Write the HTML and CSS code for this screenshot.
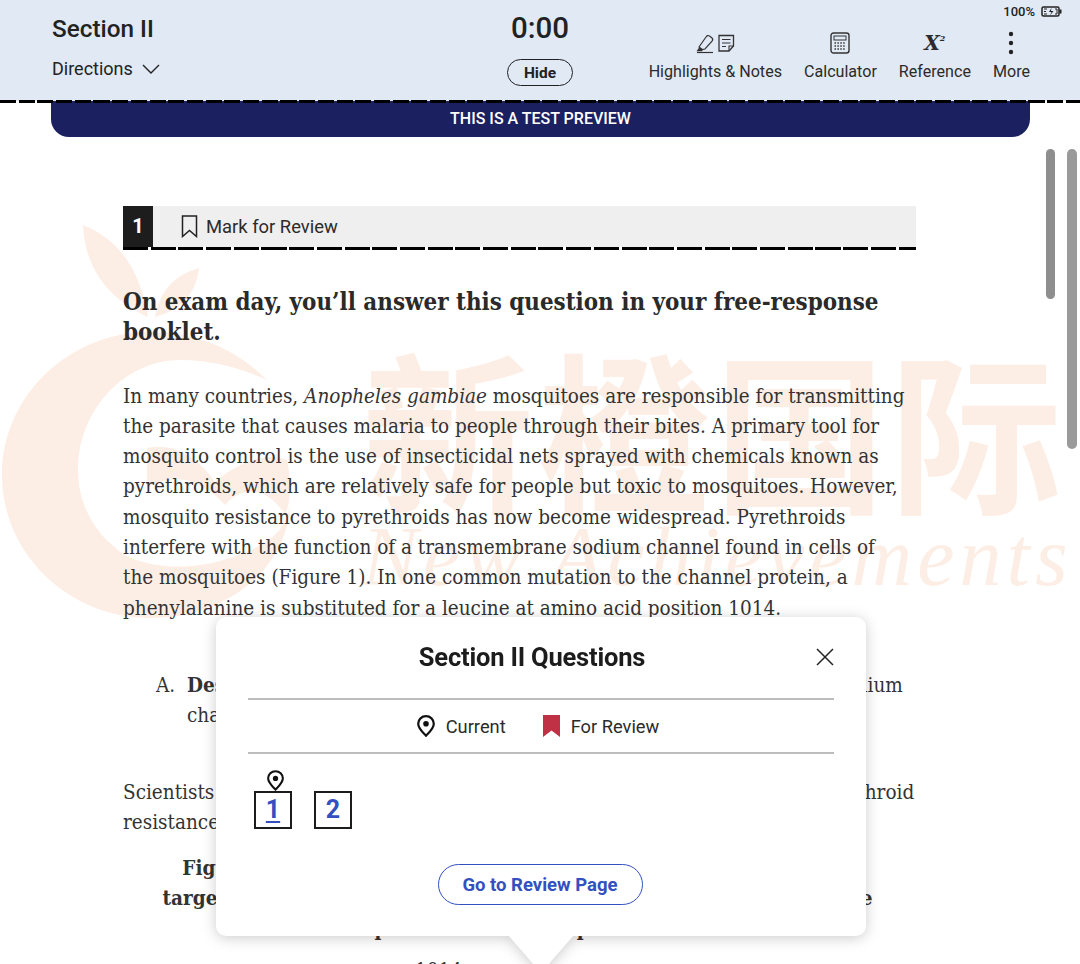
FILE: index.html
```html
<!doctype html>
<html lang="en">
<head>
  <meta charset="UTF-8" />
  <title>Section II</title>
  <link rel="stylesheet" href="styles.css">
</head>
<body>
<div class="page">
  <header class="top-bar">
    <div class="section-info">
      <div class="section-name">Section II</div>
      <div class="directions">Directions
        <svg class="chevron" width="18" height="10" viewBox="0 0 18 10"><path d="M1 1l8 8 8-8" fill="none" stroke="#222" stroke-width="1.4"/></svg>
      </div>
    </div>
    <div class="timer">
      <div class="time">0:00</div>
      <button class="hide-btn">Hide</button>
    </div>
    <div class="right-side">
      <div class="status">100%
        <svg width="21" height="11" viewBox="0 0 21 11"><rect x="1" y="1" width="17" height="9" rx="1.5" fill="none" stroke="#222" stroke-width="1.5"/><rect x="18.5" y="3.5" width="2" height="4" fill="#222"/><path d="M10.5 2L8 6h2.5L9 9.5 12.5 5H10z" fill="#222"/><path d="M3 3h3M3 5.5h2M3 8h3M14 3h2v5h-2" fill="none" stroke="#222"/></svg>
      </div>
      <nav class="tools">
        <div class="tool">
          <svg width="40" height="22" viewBox="0 0 40 22">
            <path d="M4 15L11 5c1-1.500 2-2 3.500-1L17 6c1 1 1 2 0 3.200L10 17l-3 .5z" fill="none" stroke="#333" stroke-width="1.200"/>
            <path d="M4.500 15l3.500 2.500-1 1.800H1.500z" fill="#333"/>
            <path d="M2 20.500h16" stroke="#333" stroke-width="1.200"/>
            <path d="M24 3.500h14.500v10.500l-4.500 5H24z" fill="none" stroke="#333" stroke-width="1.300"/>
            <path d="M27 7.500h8.500M27 11h8.500M27 14.500h4M34 19v-5h4.500" fill="none" stroke="#333" stroke-width="1.100"/>
          </svg>
          <span>Highlights &amp; Notes</span>
        </div>
        <div class="tool">
          <svg width="20" height="22" viewBox="0 0 20 22">
            <rect x="1" y="1" width="18" height="20" rx="2.500" fill="none" stroke="#333" stroke-width="1.400"/>
            <rect x="4" y="4" width="12" height="4" fill="none" stroke="#333" stroke-width="1"/>
            <path d="M4.500 11h11M4.500 14h11M4.500 17h11" stroke="#333" stroke-width="1.600" stroke-dasharray="1.500 1.400"/>
          </svg>
          <span>Calculator</span>
        </div>
        <div class="tool">
          <div class="ref-icon">X<sup>2</sup></div>
          <span>Reference</span>
        </div>
        <div class="tool">
          <svg width="6" height="24" viewBox="0 0 6 24"><circle cx="3" cy="3" r="2.200" fill="#222"/><circle cx="3" cy="12" r="2.200" fill="#222"/><circle cx="3" cy="21" r="2.200" fill="#222"/></svg>
          <span>More</span>
        </div>
      </nav>
    </div>
  </header>
  <div class="dash-line"></div>
  <div class="preview-banner">THIS IS A TEST PREVIEW</div>

  <main class="content">
    <div class="watermark">
      <svg class="wm-logo" width="300" height="420" viewBox="0 0 300 420">
        <path d="M83 5C120 20 140 50 148 97C110 80 85 50 83 5z" fill="#fdeee5"/>
        <path d="M199 48C196 75 180 90 155 97C160 70 175 55 199 48z" fill="#fdeee5"/>
        <path d="M267 160C235 128 195 112 150 112C70 112 2 175 2 255C2 335 70 398 150 398C225 398 287 350 290 285C285 315 265 325 233 337C190 352 150 348 125 335C95 315 78 285 78 250C78 190 125 140 180 140C215 140 245 150 267 160z" fill="#fdeee5"/>
        <path d="M147 228C175 222 200 240 215 262C240 240 270 232 287 240C292 262 290 285 285 295C270 270 245 262 225 285C205 262 175 250 147 268z" fill="#fdeee5"/>
      </svg>
      <div class="wm-cn">新橙国际</div>
      <div class="wm-en">New Achievements</div>
    </div>

    <div class="question-bar">
      <div class="question-no">1</div>
      <svg class="mark-icon" width="17" height="23" viewBox="0 0 17 23"><path d="M1.500 1h14v20.500l-7-6-7 6z" fill="none" stroke="#222" stroke-width="1.500"/></svg>
      <span>Mark for Review</span>
    </div>
    <div class="question-rule"></div>

    <h2 class="prompt">On exam day, you’ll answer this question in your free-response<br>booklet.</h2>

    <p class="passage">In many countries, <em>Anopheles gambiae</em> mosquitoes are responsible for transmitting<br>
    the parasite that causes malaria to people through their bites. A primary tool for<br>
    mosquito control is the use of insecticidal nets sprayed with chemicals known as<br>
    pyrethroids, which are relatively safe for people but toxic to mosquitoes. However,<br>
    mosquito resistance to pyrethroids has now become widespread. Pyrethroids<br>
    interfere with the function of a transmembrane sodium channel found in cells of<br>
    the mosquitoes (Figure 1). In one common mutation to the channel protein, a<br>
    phenylalanine is substituted for a leucine at amino acid position 1014.</p>

    <ol class="parts">
      <li><span class="part-letter">A.</span><div><b>Describe</b> the effect of pyrethroid exposure on the functioning of the sodium<br>channel in a mosquito cell.</div></li>
    </ol>

    <p class="passage second">Scientists investigated whether the mutation contributes to the mosquito pyrethroid<br>resistance in the mosquitoes.</p>

    <p class="caption"><b>Figure 1. Structure of the mosquito sodium channel protein that<br>target of pyrethroids. The site of the common mutation lies near the<br>protein amino acid position</b></p>
    <p class="caption-end">1014</p>
  </main>

  <div class="scroll-thumb one"></div>
  <div class="scroll-thumb two"></div>

  <section class="popup">
    <div class="popup-head">
      <h3>Section II Questions</h3>
      <svg class="close-x" width="18" height="18" viewBox="0 0 18 18"><path d="M1 1l16 16M17 1L1 17" stroke="#222" stroke-width="1.500"/></svg>
    </div>
    <div class="legend">
      <div class="legend-item">
        <svg width="18" height="22" viewBox="0 0 18 22"><path d="M9 1.200c4.300 0 7.800 3.300 7.800 7.500 0 4.700-4.800 8.800-7.800 12-3-3.200-7.800-7.300-7.800-12C1.200 4.500 4.700 1.200 9 1.200z" fill="none" stroke="#111" stroke-width="2.200"/><circle cx="9" cy="8.800" r="2.800" fill="#111"/></svg>
        <span>Current</span>
      </div>
      <div class="legend-item">
        <svg width="17" height="22" viewBox="0 0 17 22"><path d="M0 0h17v22l-8.500-6.500L0 22z" fill="#c13145"/></svg>
        <span>For Review</span>
      </div>
    </div>
    <div class="question-grid">
      <div class="q-cell">
        <svg class="pin" width="17" height="21" viewBox="0 0 18 22"><path d="M9 1.200c4.300 0 7.800 3.300 7.800 7.500 0 4.700-4.800 8.800-7.800 12-3-3.200-7.800-7.300-7.800-12C1.200 4.500 4.700 1.200 9 1.200z" fill="#fff" stroke="#111" stroke-width="2.200"/><circle cx="9" cy="8.800" r="2.800" fill="#111"/></svg>
        <a class="q-box current">1</a>
      </div>
      <div class="q-cell">
        <a class="q-box">2</a>
      </div>
    </div>
    <div class="popup-foot">
      <button class="review-btn">Go to Review Page</button>
    </div>
  </section>
</div>
</body>
</html>
```

FILE: styles.css
```css
html, body {
  margin: 0;
  padding: 0;
}
body {
  font-family: Roboto, Arial, sans-serif;
  background-color: white;
  color: #222;
}
.page {
  position: relative;
  width: 1080px;
  height: 964px;
  overflow: hidden;
}

/* top bar */
.top-bar {
  position: relative;
  z-index: 2;
  display: grid;
  grid-template-columns: 1fr 120px 1fr;
  height: 101px;
  background-color: #e1e9f5;
}
.section-info {
  padding: 14px 0 0 52px;
}
.section-name {
  font-size: 24.3px;
  line-height: 30px;
  font-weight: 500;
}
.directions {
  display: flex;
  align-items: center;
  gap: 9px;
  margin-top: 11px;
  font-size: 18px;
  line-height: 28px;
}
.timer {
  display: flex;
  flex-direction: column;
  align-items: center;
  padding-top: 11px;
}
.time {
  font-size: 29.5px;
  line-height: 34px;
  font-weight: 500;
}
.hide-btn {
  width: 66px;
  height: 27px;
  margin-top: 14px;
  padding: 0;
  background: transparent;
  border: 1.5px solid #222;
  border-radius: 14px;
  font-family: inherit;
  font-size: 15.5px;
  font-weight: 700;
  color: #222;
}
.right-side {
  display: flex;
  flex-direction: column;
  align-items: flex-end;
}
.status {
  display: flex;
  align-items: center;
  gap: 6px;
  height: 13px;
  padding: 5px 18px 0 0;
  font-size: 13px;
  font-weight: 500;
}
.tools {
  display: flex;
  gap: 22px;
  margin-top: 13px;
  padding-right: 50px;
}
.tool {
  display: flex;
  flex-direction: column;
  align-items: center;
  font-size: 16.1px;
  color: #2b2b2b;
}
.tool svg,
.ref-icon {
  height: 24px;
  margin-bottom: 7px;
}
.ref-icon {
  font-family: "DejaVu Serif", serif;
  font-style: italic;
  font-weight: 700;
  font-size: 20px;
  line-height: 24px;
}
.ref-icon sup {
  font-size: 8px;
  line-height: 0;
  vertical-align: 9px;
}
.dash-line {
  position: relative;
  z-index: 2;
  height: 3px;
  margin-top: -1px;
  background: repeating-linear-gradient(90deg, #000 0, #000 16px, transparent 16px, transparent 18.7px);
}
.preview-banner {
  position: relative;
  z-index: 1;
  height: 36px;
  margin: -2px 50px 0 51px;
  background-color: #1a2060;
  border-radius: 0 0 18px 18px;
  color: white;
  font-size: 16px;
  font-weight: 500;
  line-height: 36px;
  text-align: center;
}

/* question area */
.content {
  padding: 69px 0 0 123px;
}
.watermark {
  position: absolute;
  top: 220px;
  left: 0;
  width: 1080px;
  height: 420px;
  z-index: -1;
  color: #fdeee5;
}
.wm-logo {
  position: absolute;
  top: 0;
  left: 0;
}
.wm-cn {
  position: absolute;
  top: 110px;
  left: 362px;
  font-family: "Noto Sans CJK SC", sans-serif;
  font-size: 172px;
  line-height: 190px;
  font-weight: 700;
  letter-spacing: 4px;
  white-space: nowrap;
}
.wm-en {
  position: absolute;
  top: 292px;
  left: 362px;
  font-family: "Liberation Serif", serif;
  font-style: italic;
  font-size: 84px;
  line-height: 90px;
  letter-spacing: 5px;
  white-space: nowrap;
}
.question-bar {
  display: flex;
  align-items: center;
  width: 793px;
  height: 41px;
  background-color: #efefef;
  font-size: 18.4px;
  color: #2b2b2b;
}
.question-no {
  width: 30px;
  height: 41px;
  margin-right: 28px;
  background-color: #1d1d1d;
  color: white;
  font-size: 20px;
  font-weight: 700;
  line-height: 41px;
  text-align: center;
}
.mark-icon {
  margin-right: 8px;
}
.question-rule {
  width: 793px;
  height: 3px;
  background: repeating-linear-gradient(90deg, #000 0, #000 25px, transparent 25px, transparent 27.7px);
}
.prompt {
  margin: 37px 0 0;
  font-family: "DejaVu Serif Condensed", "DejaVu Serif", serif;
  font-size: 23.9px;
  line-height: 30.3px;
  font-weight: 700;
  color: #2a2a2a;
  white-space: nowrap;
}
.passage {
  margin: 33px 0 0;
  font-family: "DejaVu Serif Condensed", "DejaVu Serif", serif;
  font-size: 20.5px;
  line-height: 30.3px;
  color: #333;
  white-space: nowrap;
}
.passage.second {
  margin-top: 46px;
}
.parts {
  margin: 47px 0 0;
  padding: 0;
  list-style: none;
  font-family: "DejaVu Serif Condensed", "DejaVu Serif", serif;
  font-size: 20.5px;
  line-height: 30.3px;
  color: #333;
  white-space: nowrap;
}
.parts li {
  display: flex;
  padding-left: 33px;
}
.part-letter {
  width: 31px;
}
.caption {
  width: 793px;
  margin: 16px 0 0 -2px;
  font-family: "DejaVu Serif Condensed", "DejaVu Serif", serif;
  font-size: 20.5px;
  line-height: 30.3px;
  color: #333;
  text-align: center;
  white-space: nowrap;
}
.caption-end {
  margin: 11px 0 0 292px;
  font-family: "DejaVu Serif Condensed", "DejaVu Serif", serif;
  font-size: 20.5px;
  line-height: 30.3px;
  color: #333;
}

.scroll-thumb {
  position: absolute;
  top: 149px;
  width: 9px;
  border-radius: 5px;
  background-color: #8e8e8e;
}
.scroll-thumb.one {
  left: 1046px;
  height: 150px;
}
.scroll-thumb.two {
  left: 1067px;
  width: 10px;
  height: 300px;
  background-color: #9a9a9a;
}

/* question picker popup */
.popup {
  position: absolute;
  top: 617px;
  left: 216px;
  box-sizing: border-box;
  width: 650px;
  height: 319px;
  padding: 0 32px;
  background-color: white;
  border-radius: 10px;
  filter: drop-shadow(0 2px 7px rgba(0, 0, 0, 0.2));
}
.popup::after {
  content: "";
  position: absolute;
  top: 318px;
  left: 292px;
  width: 66px;
  height: 38px;
  background-color: white;
  clip-path: polygon(0 0, 100% 0, 50% 100%);
}
.popup-head {
  position: relative;
  height: 81px;
  border-bottom: 2px solid #bdbdbd;
}
.popup-head h3 {
  margin: 0 0 0 -18px;
  padding-top: 23px;
  font-size: 25.5px;
  line-height: 34px;
  font-weight: 700;
  letter-spacing: -0.2px;
  color: #1c1c1c;
  text-align: center;
}
.close-x {
  position: absolute;
  top: 31px;
  right: 0;
}
.legend {
  display: flex;
  justify-content: center;
  align-items: center;
  gap: 37px;
  height: 52px;
  padding-right: 6px;
  border-bottom: 2px solid #bdbdbd;
  font-size: 18.3px;
  color: #2b2b2b;
}
.legend-item {
  display: flex;
  align-items: center;
  gap: 11px;
}
.question-grid {
  display: flex;
  gap: 22px;
  height: 75px;
  padding: 0 0 0 6px;
}
.q-cell {
  position: relative;
  padding-top: 37px;
}
.pin {
  position: absolute;
  top: 16px;
  left: 13px;
}
.q-box {
  display: block;
  box-sizing: border-box;
  width: 38px;
  height: 38px;
  border: 2px solid #1c1c1c;
  color: #3450c0;
  font-size: 25px;
  font-weight: 700;
  line-height: 34px;
  text-align: center;
}
.q-box.current {
  text-decoration: underline;
  text-underline-offset: 3px;
}
.popup-foot {
  display: flex;
  justify-content: center;
  padding: 35px 2px 0 0;
}
.review-btn {
  width: 205px;
  height: 41px;
  padding: 0;
  background: white;
  border: 1.5px solid #3450c0;
  border-radius: 21px;
  font-family: inherit;
  font-size: 18.5px;
  font-weight: 700;
  color: #3450c0;
}
```
